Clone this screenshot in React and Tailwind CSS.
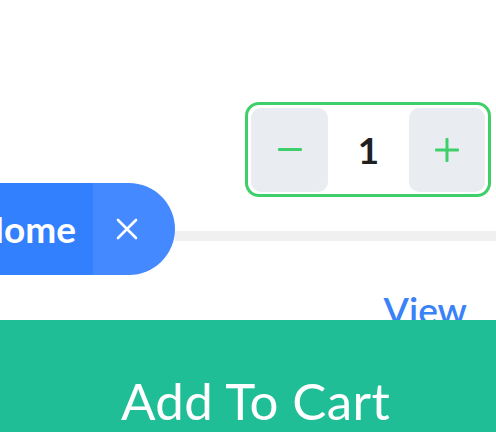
import React from "react";

export default function App() {
  return (
    <div className="w-[496px] h-[432px] overflow-hidden bg-white flex flex-col" style={{ fontFamily: "Lato, 'Noto Sans', sans-serif" }}>
      <div className="h-[102px] shrink-0" />
      <div className="self-end mr-[5px] w-[246px] h-[95px] shrink-0 border-[3px] border-[#3ecf6a] rounded-[14px] p-[3px] flex items-center justify-between">
        <div className="w-[77px] h-[84px] rounded-[10px] bg-[#e9ecf0] flex items-center justify-center">
          <svg width="24" height="4" viewBox="0 0 24 4"><rect x="0" y="0" width="24" height="3" rx="1" fill="#3ecf6a" /></svg>
        </div>
        <div className="text-[37px] font-bold text-[#1f1f1f] leading-none">1</div>
        <div className="w-[76px] h-[84px] rounded-[10px] bg-[#e9ecf0] flex items-center justify-center">
          <svg width="24" height="24" viewBox="0 0 24 24"><rect x="0" y="10.5" width="24" height="3" rx="1" fill="#3ecf6a" /><rect x="10.5" y="0" width="3" height="24" rx="1" fill="#3ecf6a" /></svg>
        </div>
      </div>
      <div className="mt-[-14px] flex items-center h-[92px] shrink-0">
        <div className="ml-[-40px] w-[133px] shrink-0 h-full bg-[#3380ff] flex items-center justify-end pr-[17px] text-white font-bold text-[37px]">Home</div>
        <div className="w-[82px] shrink-0 h-full bg-[#4489ff] rounded-r-full flex items-center justify-start pl-[23px]">
          <svg width="22" height="22" viewBox="0 0 22 22" stroke="white" strokeWidth="2.6" strokeLinecap="round"><path d="M2 2L20 20M20 2L2 20" /></svg>
        </div>
        <div className="flex-1 h-[10px] bg-[#f0f0f0] mt-[14px]" />
      </div>
      <div className="h-[45px] shrink-0 flex justify-end pr-[29px] pt-[16px]">
        <span className="text-[#3a82f7] text-[37px] font-semibold leading-none">View</span>
      </div>
      <div className="relative z-10 h-[120px] shrink-0 bg-[#20be96] flex justify-center pt-[55px] pl-[15px]">
        <span className="text-white text-[51px] leading-none tracking-[0.4px]">Add To Cart</span>
      </div>
    </div>
  );
}
